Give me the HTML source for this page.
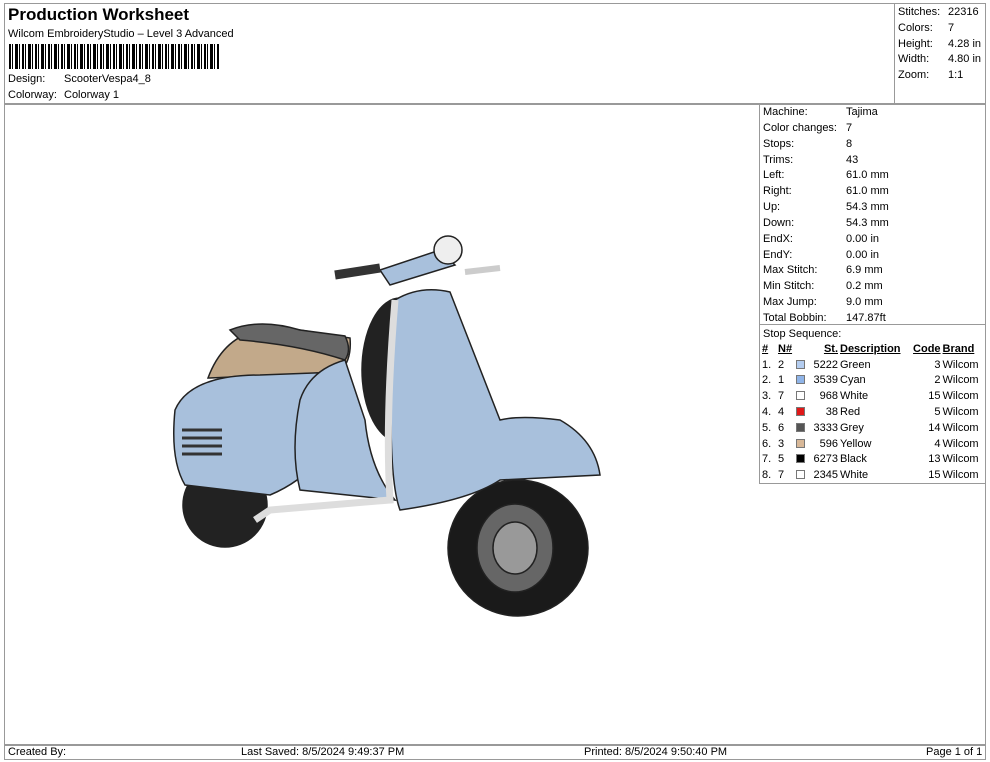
<!DOCTYPE html>
<html><head><meta charset="utf-8"><style>
*{margin:0;padding:0;box-sizing:border-box}
body{width:990px;height:762px;background:#fff;font-family:"Liberation Sans",Arial,sans-serif;font-size:11px;color:#000;position:relative;overflow:hidden}
.a{position:absolute;white-space:nowrap}
.box{position:absolute;border:1px solid #999}
.sw{display:inline-block;width:9px;height:9px;border:1px solid #777;vertical-align:-1px}
table{border-collapse:collapse;font-size:11px}
td{padding:0 1px;height:15.8px;white-space:nowrap}
</style></head><body>
<div class="box" style="left:4px;top:3px;width:982px;height:101px"></div>
<div class="box" style="left:894px;top:3px;width:92px;height:101px"></div>
<div class="box" style="left:4px;top:104px;width:982px;height:641px"></div>
<div class="box" style="left:759px;top:104px;width:227px;height:380px"></div>
<div class="box" style="left:759px;top:324px;width:227px;height:160px;border-left:none;border-right:none;border-bottom:none"></div>
<div class="box" style="left:4px;top:745px;width:982px;height:15px"></div>
<div class="a" style="left:8px;top:5px;font-size:17px;font-weight:bold">Production Worksheet</div>
<div class="a" style="left:8px;top:28px">Wilcom EmbroideryStudio – Level 3 Advanced</div>
<div class="a" style="left:9px;top:44px;width:210px;height:25px;background:repeating-linear-gradient(90deg,#000 0 2px,#fff 2px 3px,#000 3px 4px,#fff 4px 6px,#000 6px 9px,#fff 9px 10px,#000 10px 11px,#fff 11px 13px)"></div>
<div class="a" style="left:8px;top:73px">Design:</div><div class="a" style="left:64px;top:73px">ScooterVespa4_8</div>
<div class="a" style="left:8px;top:89px">Colorway:</div><div class="a" style="left:64px;top:89px">Colorway 1</div>
<div class="a" style="left:898px;top:5px;line-height:15.8px">Stitches:<br>Colors:<br>Height:<br>Width:<br>Zoom:</div>
<div class="a" style="left:948px;top:5px;line-height:15.8px">22316<br>7<br>4.28 in<br>4.80 in<br>1:1</div>
<div class="a" style="left:763px;top:105px;line-height:15.85px">Machine:<br>Color changes:<br>Stops:<br>Trims:<br>Left:<br>Right:<br>Up:<br>Down:<br>EndX:<br>EndY:<br>Max Stitch:<br>Min Stitch:<br>Max Jump:<br>Total Bobbin:<br>Stop Sequence:</div>
<div class="a" style="left:846px;top:105px;line-height:15.85px">Tajima<br>7<br>8<br>43<br>61.0 mm<br>61.0 mm<br>54.3 mm<br>54.3 mm<br>0.00 in<br>0.00 in<br>6.9 mm<br>0.2 mm<br>9.0 mm<br>147.87ft</div>
<table class="a" style="left:761px;top:341px;width:223px">
<tr style="font-weight:bold;text-decoration:underline"><td style="width:16px">#</td><td style="width:18px">N#</td><td style="width:14px;text-decoration:none"></td><td style="width:30px;text-align:right">St.</td><td>Description</td><td style="text-align:right">Code</td><td>Brand</td></tr>
<tr><td>1.</td><td>2</td><td><span class="sw" style="background:#b4cdf0"></span></td><td style="text-align:right">5222</td><td>Green</td><td style="text-align:right">3</td><td>Wilcom</td></tr>
<tr><td>2.</td><td>1</td><td><span class="sw" style="background:#8fb4e8"></span></td><td style="text-align:right">3539</td><td>Cyan</td><td style="text-align:right">2</td><td>Wilcom</td></tr>
<tr><td>3.</td><td>7</td><td><span class="sw" style="background:#fff"></span></td><td style="text-align:right">968</td><td>White</td><td style="text-align:right">15</td><td>Wilcom</td></tr>
<tr><td>4.</td><td>4</td><td><span class="sw" style="background:#e01818"></span></td><td style="text-align:right">38</td><td>Red</td><td style="text-align:right">5</td><td>Wilcom</td></tr>
<tr><td>5.</td><td>6</td><td><span class="sw" style="background:#555"></span></td><td style="text-align:right">3333</td><td>Grey</td><td style="text-align:right">14</td><td>Wilcom</td></tr>
<tr><td>6.</td><td>3</td><td><span class="sw" style="background:#d8b898"></span></td><td style="text-align:right">596</td><td>Yellow</td><td style="text-align:right">4</td><td>Wilcom</td></tr>
<tr><td>7.</td><td>5</td><td><span class="sw" style="background:#000"></span></td><td style="text-align:right">6273</td><td>Black</td><td style="text-align:right">13</td><td>Wilcom</td></tr>
<tr><td>8.</td><td>7</td><td><span class="sw" style="background:#fff"></span></td><td style="text-align:right">2345</td><td>White</td><td style="text-align:right">15</td><td>Wilcom</td></tr>
</table>
<div class="a" style="left:8px;top:746px">Created By:</div>
<div class="a" style="left:241px;top:746px">Last Saved: 8/5/2024 9:49:37 PM</div>
<div class="a" style="left:584px;top:746px">Printed: 8/5/2024 9:50:40 PM</div>
<div class="a" style="left:926px;top:746px">Page 1 of 1</div>
<svg class="a" style="left:0;top:0" width="760" height="745" viewBox="0 0 760 745">
<g stroke="#222" stroke-width="1.5">
<ellipse cx="400" cy="370" rx="38" ry="72" fill="#222"/>
<ellipse cx="225" cy="505" rx="42" ry="42" fill="#222"/>
<ellipse cx="518" cy="548" rx="70" ry="68" fill="#1a1a1a"/>
<ellipse cx="515" cy="548" rx="38" ry="44" fill="#666"/>
<ellipse cx="515" cy="548" rx="22" ry="26" fill="#999"/>
<path d="M208 378 Q230 318 300 330 L350 338 Q352 360 340 372 L210 378Z" fill="#c2a98a"/>
<path d="M230 330 Q260 318 300 330 L345 336 Q352 350 345 360 Q300 345 240 340Z" fill="#666"/>
<path d="M175 410 Q190 375 260 375 L340 372 L350 400 Q330 470 270 495 L185 485 Q170 460 175 410Z" fill="#a8c0dc"/>
<path d="M300 400 Q310 370 345 360 L365 420 Q370 470 395 500 L300 490 Q290 450 300 400Z" fill="#a8c0dc"/>
<path d="M395 300 Q420 285 450 292 L500 420 Q520 415 560 420 Q595 440 600 475 L500 480 Q470 500 400 510 Q385 470 395 300Z" fill="#a8c0dc"/>
<path d="M395 300 Q385 420 390 500 L270 510 L255 520" fill="none" stroke="#ddd" stroke-width="7"/>
<path d="M380 270 L440 250 L455 265 L390 285Z" fill="#a8c0dc"/>
<circle cx="448" cy="250" r="14" fill="#eee"/>
<path d="M335 275 L380 268" stroke="#333" stroke-width="9"/>
<path d="M465 272 L500 268" stroke="#ccc" stroke-width="6"/>
<path d="M182 430 h40 M182 438 h40 M182 446 h40 M182 454 h40" stroke="#333" stroke-width="3"/>
</g>
</svg>
</body></html>
